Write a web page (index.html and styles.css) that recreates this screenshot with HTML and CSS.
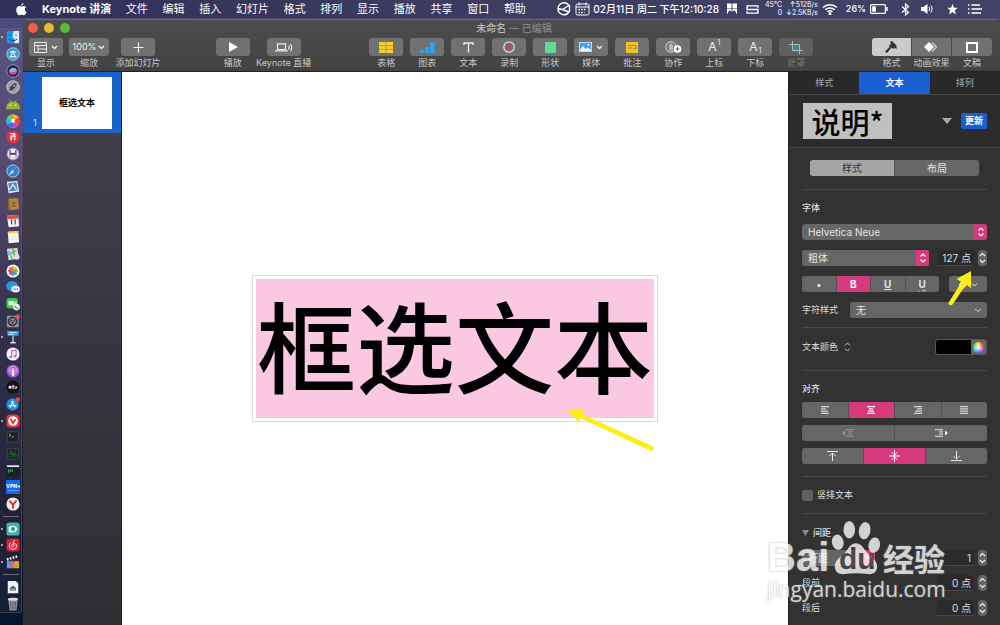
FILE: index.html
```html
<!DOCTYPE html>
<html lang="zh-CN">
<head>
<meta charset="utf-8">
<title>Keynote 讲演</title>
<link rel="stylesheet" href="styles.css">
</head>
<body>
<header class="menubar">
  <svg class="apple" viewBox="0 0 12 14"><path fill="#fff" d="M8.1 0c.1 1.500-1.200 2.900-2.500 2.900C5.500 1.500 6.800.2 8.100 0zM6.100 3.900C6.700 3.900 7.400 3.200 8.500 3.200c1 0 2 .5 2.600 1.400-2.200 1.300-1.800 4.300.5 5.200-.5 1.500-1.700 3.600-3 3.600-.9 0-1.300-.6-2.400-.6s-1.500.6-2.400.6C2.200 13.400.3 10.300.3 7.600c0-2.700 1.600-4.300 3.300-4.300 1.100 0 1.900.6 2.500.6z"/></svg>
  <nav class="menus">
    <b>Keynote 讲演</b><span>文件</span><span>编辑</span><span>插入</span><span>幻灯片</span><span>格式</span><span>排列</span><span>显示</span><span>播放</span><span>共享</span><span>窗口</span><span>帮助</span>
  </nav>
  <div class="status">
    <svg width="15" height="14" viewBox="0 0 15 14" fill="none" stroke="#fff" stroke-width="1.400"><path d="M13 3.500A6 6 0 1 0 13 10M13.500 3 6.500 7.500 1.500 6.500M6.500 7.500l6.500 2.500M13.500 3v7"/></svg>
    <svg width="15" height="14" viewBox="0 0 15 14" fill="none" stroke="#fff"><rect x="1" y="2" width="13" height="11" rx="1.500"/><path d="M1 5h13M4 .5v3M11 .5v3"/><path d="M3.500 7.500h8M3.500 10.500h6" stroke-width="1.500" stroke-dasharray="1.500 1.200"/></svg>
    <time>02月11日 周二 下午12:10:28</time>
    <svg class="s-flag" width="10" height="12" viewBox="0 0 11 12" fill="#fff"><path d="M0 0h5v9l-2.500-1.500L0 12zM6 0h5v12L8.500 7.500 6 9z"/><path d="M0 5.500h11" stroke="#3d3c5e" stroke-width=".6"/></svg>
    <svg class="s-swap" width="13" height="9" viewBox="0 0 14 10" fill="none" stroke="#fff" stroke-width="1.600"><path d="M13 3V1H1v4h4M1 7v2h12V5H4.500"/></svg>
    <div class="net"><span>45°C<br>0</span><span>↑512B/s<br>↓2.5KB/s</span></div>
    <svg class="s-wifi" width="16" height="12" viewBox="0 0 16 12" fill="none" stroke="#fff" stroke-width="1.500"><path d="M1 4.500a10 10 0 0 1 14 0M3.300 6.800a6.800 6.800 0 0 1 9.400 0M5.600 9a3.400 3.400 0 0 1 4.800 0"/><circle cx="8" cy="10.800" r=".7" fill="#fff"/></svg>
    <span class="pct">26%</span>
    <svg class="s-bat" width="18" height="10" viewBox="0 0 18 10"><rect x=".6" y=".6" width="14.800" height="8.800" rx="1" fill="none" stroke="#fff" stroke-width="1.200"/><path fill="#fff" d="M2.200 2.200h3.600v5.600H2.200zM16.200 3h1.500v4h-1.500z"/></svg>
    <svg class="s-bt" width="9" height="13" viewBox="0 0 9 13" fill="none" stroke="#fff" stroke-width="1.200"><path d="M1 3.500l6.500 6L4.500 12V1l3 2.500-6.500 6"/></svg>
    <svg class="s-vol" width="12" height="10" viewBox="0 0 12 10"><path fill="#fff" d="M0 3h2.500L6.500 0v10L2.500 7H0z"/><path d="M8 3a3 3 0 0 1 0 4M9.700 1.500a5 5 0 0 1 0 7" fill="none" stroke="#fff"/></svg>
    <svg class="s-star" width="11" height="11" viewBox="0 0 12 12"><path fill="#fff" d="M6 0l1.600 4H12L8.500 6.900 9.800 11.500 6 8.700 2.200 11.500 3.500 6.900 0 4h4.400z"/></svg>
    <svg class="s-list" width="14" height="10" viewBox="0 0 14 10" stroke="#fff" stroke-width="1.500"><path d="M0 1h1.500M0 5h1.500M0 9h1.500M3.500 1H12M3.500 5H14M3.500 9H13"/></svg>
  </div>
</header>

<div class="desktop">
  <aside class="dock">
    <ul>
      <li class="run"><svg viewBox="0 0 16 16"><rect x="1" y="1" width="14" height="14" rx="1.500" fill="#2196ee"/><path d="M9 1h6v14h-5c-.6-2-.7-4-.6-6H7.500C7.700 6 8.200 3 9 1z" fill="#dcebf5"/><path d="M4.500 5v1.500M11.500 5v1.500M3.500 10.500c3 2.400 6 2.400 9 0" stroke="#123a66" fill="none"/></svg></li>
      <li><svg viewBox="0 0 16 16"><circle cx="8" cy="8" r="7.200" fill="#3b9bd0" stroke="#a9d6e8"/><path d="M4 11h8M5 12l3-7 3 7M4.500 6.500c2-2 5-2 7 0" stroke="#dff2f9" fill="none" stroke-width="1.200"/></svg></li>
      <li><svg viewBox="0 0 16 16"><circle cx="8" cy="8" r="7.200" fill="#23234a" stroke="#a9a8c0"/><path d="M3 9c2-6 8-6 10-1-3-2-7 0-10 1z" fill="#5fd0e8"/><path d="M3 9c4-1 7-3 10-1-1 5-7 6-10 1z" fill="#d34b9b"/><path d="M5 9c2-1 4-1 6-1" stroke="#fff"/></svg></li>
      <li><svg viewBox="0 0 16 16"><circle cx="8" cy="8" r="7.200" fill="#9ba1aa" stroke="#c9ced4"/><path d="M12 3.500c-3 0-5 2-6 4l-2 .5 1 1-1.500 3.500L7 11l1 1 .6-2c2-1 3.500-3.500 3.400-6.500z" fill="#3b4049"/><circle cx="9.500" cy="6.500" r="1" fill="#ccd"/></svg></li>
      <li><svg viewBox="0 0 16 16"><path d="M0 14c0-6 3-9 8-9s8 3 8 9z" fill="#8fb53a"/><path d="M4 3l1.500 3M12 3l-1.500 3" stroke="#8fb53a"/><circle cx="5" cy="9.500" r=".9" fill="#fff"/><circle cx="11" cy="9.500" r=".9" fill="#fff"/></svg></li>
      <li><svg viewBox="0 0 16 16"><circle cx="8" cy="8" r="7.500" fill="#fff"/><path d="M8 8L8 .5A7.500 7.500 0 0 1 14.500 4z" fill="#ffb100"/><path d="M8 8l6.500-4a7.500 7.500 0 0 1 0 8z" fill="#ee3f34"/><path d="M8 8l6.500 4A7.500 7.500 0 0 1 8 15.500z" fill="#d43bb5"/><path d="M8 8v7.500A7.500 7.500 0 0 1 1.500 12z" fill="#3b69e9"/><path d="M8 8l-6.500 4a7.500 7.500 0 0 1 0-8z" fill="#23bfd4"/><path d="M8 8L1.500 4A7.500 7.500 0 0 1 8 .5z" fill="#71c83c"/><circle cx="8" cy="8" r="2.200" fill="#fff"/></svg></li>
      <li><svg viewBox="0 0 16 16"><circle cx="8" cy="8" r="7.500" fill="#e0323b"/><path d="M4.500 4h5l-2 2M5 7h6M6 7v5M10 4v8M4.500 9.500h3" stroke="#fff" fill="none" stroke-width="1.200"/></svg></li>
      <li><svg viewBox="0 0 16 16"><circle cx="8" cy="8" r="7" fill="#e7def2" stroke="#8a68bb"/><rect x="4" y="3.500" width="8" height="8.500" fill="#5c5178"/><path fill="#fff" d="M5.500 3.500h5v3h-5zM5 9h6v3H5z"/></svg></li>
      <li><svg viewBox="0 0 16 16"><circle cx="8" cy="8" r="7" fill="#2087dc" stroke="#c5d9e8"/><path d="M12.500 3.500L9 9 7 7z" fill="#f2574d"/><path d="M3.500 12.500L7 7l2 2z" fill="#fff"/></svg></li>
      <li><svg viewBox="0 0 16 16"><path fill="#eef3f7" d="M1 2l12-1 2 12-12 2z"/><path fill="#4b8ac9" d="M2.500 3.500l9.500-1 1.500 9.500-9.500 1z"/><path d="M4 11l4-6 4 6" stroke="#dbe6f2" stroke-width="1.500" fill="none"/></svg></li>
      <li><svg viewBox="0 0 16 16"><path fill="#b1843e" d="M2 2l12-1 1 13-12 1z"/><path fill="#8a6127" d="M2 2l1.500 0 1 13L3 15z"/><circle cx="9" cy="7" r="1.700" fill="#84602c"/><path d="M6 11c1-2.500 5-2.500 6 0z" fill="#84602c"/></svg></li>
      <li><svg viewBox="0 0 16 16"><path fill="#f5f5f5" d="M1 2l13-1 1 13-12 1z"/><path fill="#e34b43" d="M1 2l13-1 .3 4L1.500 6z"/><path d="M5.500 7.500l1-.5v5M9.500 7.500l1-.5v5" stroke="#444" stroke-width="1.300" fill="none"/></svg></li>
      <li><svg viewBox="0 0 16 16"><path fill="#f9f8ee" d="M2 2l12-1 1 13-12 1z"/><path fill="#f5c743" d="M2 2l12-1 .2 2L2.200 4z"/><path d="M4 8l9-.7M4 11l9-.7" stroke="#d8d5c5" stroke-width=".6"/></svg></li>
      <li><svg viewBox="0 0 16 16"><path fill="#d9e3c5" d="M1 2l12-1 2 12-12 2z"/><path d="M3 4l4 10M2 9l10-5" stroke="#6fb8d5" stroke-width="2"/><path d="M8 2l2 9" stroke="#72ae55" stroke-width="2"/><circle cx="12.500" cy="11.500" r="3" fill="#dfe2e5"/></svg></li>
      <li><svg viewBox="0 0 16 16"><circle cx="8" cy="8" r="7.500" fill="#f5f5f0"/><g stroke-width="3.200" stroke-linecap="round"><path d="M8 6V4" stroke="#f6a12b"/><path d="M9.500 6.500L11 5" stroke="#d9c62c"/><path d="M10 8h2" stroke="#7bbf49"/><path d="M9.500 9.500L11 11" stroke="#42ad9d"/><path d="M8 10v2" stroke="#5a88cf"/><path d="M6.500 9.500L5 11" stroke="#8f62b8"/><path d="M6 8H4" stroke="#d4507b"/><path d="M6.500 6.500L5 5" stroke="#ee6440"/></g></svg></li>
      <li><svg viewBox="0 0 16 16"><ellipse cx="7" cy="7" rx="6.800" ry="6" fill="#2797ee"/><ellipse cx="11" cy="10.500" rx="4.800" ry="3.800" fill="#e9f4fc"/><path d="M8.500 10.500h5.500" stroke="#3d7fb9" stroke-width="1.500" stroke-dasharray="1.300 .7"/></svg></li>
      <li><svg viewBox="0 0 16 16"><rect x=".5" y="1" width="13" height="12" rx="3" fill="#3bc74e"/><path fill="#fff" d="M3 4.500h6v5H3zM9.500 6.500L12 5v4z"/><circle cx="12" cy="11.500" r="3.800" fill="#e8f5e8"/><path d="M10.500 10c0 2 1.500 3 3 3" stroke="#3bb14a" stroke-width="1.200" fill="none"/></svg></li>
      <li><svg viewBox="0 0 16 16"><rect x="1" y="2" width="13.500" height="13" rx="1" fill="#8f949a"/><circle cx="7.500" cy="8.500" r="5" fill="#33373d" stroke="#22262b"/><circle cx="7.500" cy="8.500" r="3.200" fill="none" stroke="#aaa"/><path d="M7.500 8.500V5.500M7.500 8.500l3 1.500M7.500 8.500L4.500 10" stroke="#aaa"/><circle cx="13.500" cy="2.800" r="2.500" fill="#ef4440"/></svg></li>
      <li class="run"><svg viewBox="0 0 16 16"><path fill="#2fa0e8" d="M1 1h14l-1 5.500H2z"/><path d="M3 3h9M3 5h6" stroke="#d6f0ff"/><path d="M8 6.500V14" stroke="#cbd3da" stroke-width="1.500"/><ellipse cx="8" cy="14.500" rx="3.500" ry="1" fill="#dde2e6"/></svg></li>
      <li><svg viewBox="0 0 16 16"><circle cx="8" cy="8" r="7.500" fill="#f6f3fa"/><path d="M6.500 11.500V4.500l5-1v7" stroke="#b05bd5" stroke-width="1.300" fill="none"/><ellipse cx="5.300" cy="11.500" rx="1.600" ry="1.300" fill="#3f92e5"/><ellipse cx="10.300" cy="10.700" rx="1.600" ry="1.300" fill="#ee4c7e"/></svg></li>
      <li><svg viewBox="0 0 16 16"><circle cx="8" cy="8" r="7.500" fill="#a24bcb"/><circle cx="8" cy="7.500" r="4.800" fill="none" stroke="#e8cdf5"/><circle cx="8" cy="7.500" r="2.700" fill="none" stroke="#e8cdf5"/><path d="M8 7v6" stroke="#fff" stroke-width="2" stroke-linecap="round"/></svg></li>
      <li><svg viewBox="0 0 16 16"><circle cx="8" cy="8" r="7.500" fill="#111215"/><circle cx="4.700" cy="8.300" r="1.700" fill="#fff"/><path d="M8 5.500v4.500h1.500M7 7h2.500M10 7l1.300 3L12.800 7" stroke="#fff" fill="none"/></svg></li>
      <li><svg viewBox="0 0 16 16"><circle cx="7.500" cy="8.500" r="7" fill="#228ee9"/><path d="M4.500 12l4-7.500M6.500 4.500l4 7.500M3 10h9" stroke="#fff" stroke-width="1.300"/><circle cx="13.500" cy="2.800" r="2.500" fill="#ef4440"/></svg></li>
      <li class="run"><svg viewBox="0 0 16 16"><rect x=".5" y=".5" width="15" height="15" rx="4" fill="#e2383d"/><circle cx="8" cy="8" r="5.500" fill="#fff"/><path d="M5.500 6L8 10.500l2.500-4" stroke="#e2383d" stroke-width="2" fill="none" stroke-linecap="round"/></svg></li>
      <li><svg viewBox="0 0 16 16"><rect x="1.500" y="2" width="13" height="12" rx="1" fill="#202124" stroke="#4a4b4e"/><path d="M3.500 4.500l2 1.500-2 1.500M6.500 8h2.500" stroke="#ddd" fill="none" stroke-width=".8"/></svg></li>
      <li><svg viewBox="0 0 16 16"><rect x="1.500" y="2" width="13" height="12" rx="1" fill="#17241f" stroke="#4a4b4e"/><path d="M2 8h3l1-3 2 6 1-5 1 3h4" stroke="#2f7a4b" fill="none" stroke-width=".8"/><path d="M2 11h12M5 3v10M11 3v10" stroke="#2a5d40" stroke-width=".5"/></svg></li>
      <li><svg viewBox="0 0 16 16"><rect x="1" y="2" width="14" height="12" fill="#182224"/><path d="M1 2.500h14" stroke="#e7ecec" stroke-width="2"/><path d="M3 6v4M5 6v3M7 6v3" stroke="#2fd45a"/></svg></li>
      <li><svg viewBox="0 0 16 16"><rect x="0" y="0" width="16" height="16" rx="1" fill="#1769ed"/><text class="vpn" x="0" y="9">VPN+</text><path d="M2 12h12" stroke="#7fb0ff" stroke-width=".8"/></svg></li>
      <li><svg viewBox="0 0 16 16"><circle cx="8" cy="8" r="7.500" fill="#f6f3f1"/><path d="M4 4l4 5 4-5M8 8.500V13.500" stroke="#d92f22" stroke-width="2.200" fill="none"/></svg></li>
      <li class="rule"></li>
      <li class="run"><svg viewBox="0 0 16 16"><rect x=".5" y=".5" width="15" height="15" rx="3" fill="#45b1a8"/><path d="M3 11V6c3-3 9-2 10 2-1 4-6 5-10 3z" fill="#e8f7f4"/><circle cx="8" cy="8" r="2.200" fill="#268c86"/></svg></li>
      <li class="run"><svg viewBox="0 0 16 16"><rect x=".5" y=".5" width="15" height="15" rx="3.500" fill="#d82034"/><path d="M10.500 3C8 2.500 8.300 5 9 8.500 9.300 11 6.300 10.500 6.500 8.500 6.800 6 11 5.500 12 8c.8 2.500-1 5-4 5-4 0-6-5-2.500-8" stroke="#fff" stroke-width="1.100" fill="none"/></svg></li>
      <li class="run"><svg viewBox="0 0 16 16"><rect x="1" y="5" width="14" height="10" rx="1" fill="#333"/><path fill="#39b1e5" d="M1 7h5l-2 8H1z"/><path fill="#de5bb7" d="M6 7h4l-3 8H4z"/><path fill="#f59b2d" d="M10 7h5v4L7 15z"/><path fill="#8bc94a" d="M15 11v4H7z"/><path d="M1 5l13-3.500" stroke="#eee" stroke-width="3" stroke-dasharray="2 1.400"/></svg></li>
      <li class="rule"></li>
      <li><svg viewBox="0 0 16 16"><path fill="#f0f3f4" d="M2 1h9l3 3v11H2z"/><path fill="#b9d9e5" d="M11 1l3 3h-3z"/><path d="M4.500 12V9l3.500-2.500L11.500 9v3z" fill="#4a5560"/><path d="M5 10.500h6" stroke="#cfd8dc"/></svg></li>
      <li><svg viewBox="0 0 16 16"><path fill="#8e9196" d="M2.500 2h11l-1.500 13.500H4z"/><ellipse cx="8" cy="2.500" rx="5.700" ry="1.700" fill="#d5d7da"/><path d="M5 5l.7 9M8 5v9M11 5l-.7 9" stroke="#55585e"/></svg></li>
    </ul>
  </aside>

  <main class="window">
    <header class="chrome">
      <div class="titlebar">
        <div class="lights"><i class="red"></i><i class="yellow"></i><i class="green"></i></div>
        <h1>未命名 <span>— 已编辑</span></h1>
      </div>
      <div class="toolbar">
        <div class="tools">
          <div class="tool"><button aria-labelledby="t1"><svg width="13" height="11" viewBox="0 0 13 11" fill="none" stroke="#eee"><path d="M.5.5h12v10H.5zM.5 3.500h12M4 3.500v7M4 7h8.500" /></svg><svg width="7" height="5" viewBox="0 0 7 5" fill="none" stroke="#eee" stroke-width="1.400"><path d="M1 1l2.500 2.500L6 1"/></svg></button><span id="t1">显示</span></div>
          <div class="tool zoomer"><button aria-labelledby="t2">100%<svg width="7" height="5" viewBox="0 0 7 5" fill="none" stroke="#eee" stroke-width="1.400"><path d="M1 1l2.500 2.500L6 1"/></svg></button><span id="t2">缩放</span></div>
          <div class="tool add"><button aria-labelledby="t3"><svg width="11" height="11" viewBox="0 0 11 11" stroke="#eee" stroke-width="1.200"><path d="M5.500.5v10M.5 5.500h10"/></svg></button><span id="t3">添加幻灯片</span></div>
        </div>
        <div class="tools play">
          <div class="tool"><button aria-labelledby="t4"><svg width="10" height="10" viewBox="0 0 10 10" fill="#fff"><path d="M1 0l9 5-9 5z"/></svg></button><span id="t4">播放</span></div>
          <div class="tool"><button aria-labelledby="t5"><svg width="18" height="9" viewBox="0 0 18 9" fill="none" stroke="#eee" stroke-width="1.200"><path d="M2.500.8h8v5.700h-8zM0 7.900h13M13.500 2.500q1.500 2 0 4M15.500 1q2.500 3.500 0 7"/></svg></button><span id="t5">Keynote 直播</span></div>
        </div>
        <div class="tools">
          <div class="tool"><button aria-labelledby="t6"><svg width="14" height="11" viewBox="0 0 14 11"><path fill="#f6d22f" d="M0 0h14v11H0z"/><path d="M0 3.700h14M0 7.300h14M7 0v11" stroke="#a58a30" stroke-width=".8"/></svg></button><span id="t6">表格</span></div>
          <div class="tool"><button aria-labelledby="t7"><svg width="15" height="11" viewBox="0 0 15 11" fill="#2ea4ee"><path d="M0 8h4v3H0zM5 5h4v6H5zM10 0h4.500v11H10z"/></svg></button><span id="t7">图表</span></div>
          <div class="tool"><button aria-labelledby="t8"><svg width="11" height="11" viewBox="0 0 11 11" fill="none" stroke="#eee" stroke-width="1.300"><path d="M1 3V1h9v2M5.500 1v9.500"/></svg></button><span id="t8">文本</span></div>
          <div class="tool"><button aria-labelledby="t9"><svg width="12" height="12" viewBox="0 0 12 12"><circle cx="6" cy="6" r="5.200" fill="none" stroke="#ddd" stroke-width="1.300"/><circle cx="6" cy="6" r="2.300" fill="#e1394a"/></svg></button><span id="t9">录制</span></div>
          <div class="tool"><button aria-labelledby="t10"><svg width="11" height="11" viewBox="0 0 11 11"><path fill="#5fdc94" d="M0 0h11v11H0z"/></svg></button><span id="t10">形状</span></div>
          <div class="tool"><button aria-labelledby="t11"><svg width="13" height="10" viewBox="0 0 13 10"><path fill="#b9dcfa" d="M0 0h13v10H0z"/><path fill="#4c9af2" d="M1 1h11v8H1z"/><path fill="#f2f8ff" d="M1 8l3-4 2.500 3L9 5.500 12 8v1H1z"/><circle cx="9.500" cy="3" r="1" fill="#fff"/></svg><svg width="7" height="5" viewBox="0 0 7 5" fill="none" stroke="#eee" stroke-width="1.400"><path d="M1 1l2.500 2.500L6 1"/></svg></button><span id="t11">媒体</span></div>
          <div class="tool"><button aria-labelledby="t12"><svg width="12" height="11" viewBox="0 0 12 11"><path fill="#f2c22c" d="M0 0h12v11H0z"/><path d="M2 3.500h8v3H7.500M2 6h4" stroke="#a5801a" fill="none"/></svg></button><span id="t12">批注</span></div>
          <div class="tool"><button aria-labelledby="t13"><svg width="17" height="12" viewBox="0 0 17 12"><circle cx="6" cy="6" r="5.200" fill="none" stroke="#ddd"/><path d="M4 9.500V7L3.500 4.500 6 2l2.500 2.500L8 7v2.500" fill="#bbb"/><circle cx="12.500" cy="8" r="3.800" fill="#fff"/><path d="M12.500 6v4M10.500 8h4" stroke="#666"/></svg></button><span id="t13">协作</span></div>
          <div class="tool"><button class="letter" aria-labelledby="t14">A<sup>1</sup></button><span id="t14">上标</span></div>
          <div class="tool"><button class="letter" aria-labelledby="t15">A<sub>1</sub></button><span id="t15">下标</span></div>
          <div class="tool off"><button disabled aria-labelledby="t16"><svg width="14" height="13" viewBox="0 0 14 13"><path fill="#44859c" d="M4 4h6v5H4z"/><path d="M3.500 0v9.500H14M0 3.500h10.500V13" fill="none" stroke="#b5b5b5"/></svg></button><span id="t16">遮罩</span></div>
        </div>
        <div class="tools views">
          <div class="tool"><button aria-labelledby="t17"><svg width="12" height="12" viewBox="0 0 12 12" fill="#333"><path d="M5 1l2-1 4.500 4.500v4L9.500 6.500 8.500 8 6.500 6.500 2 12 0 10.500 5 5.500 3.500 5 6 3z"/></svg></button><span id="t17">格式</span></div>
          <div class="tool"><button aria-labelledby="t18"><svg width="14" height="10" viewBox="0 0 14 10"><path fill="#fff" d="M5 0l5 5-5 5-5-5z"/><path d="M8 .5L12.500 5 8 9.500" fill="none" stroke="#ccc" stroke-width="1.300"/></svg></button><span id="t18">动画效果</span></div>
          <div class="tool"><button aria-labelledby="t19"><svg width="12" height="11" viewBox="0 0 12 11"><rect x="1" y="1" width="10" height="9" fill="none" stroke="#fff" stroke-width="2"/></svg></button><span id="t19">文稿</span></div>
        </div>
      </div>
    </header>

    <div class="content">
      <aside class="slides"><div class="slide"><span class="num">1</span><div class="thumb">框选文本</div></div></aside>
      <section class="canvas">
        <div class="textbox"><p>框选文本</p>
          <svg class="arrow-a" width="90" height="46" viewBox="0 0 90 46"><path fill="#fbee12" d="M1 2l16-.5-2 4.500 70 32q3 2 1 4t-4 0L13 10l-1 5z"/></svg>
        </div>
      </section>

      <aside class="inspector">
        <div class="tabs"><button>样式</button><button class="active">文本</button><button>排列</button></div>
        <div class="preset"><span class="sample">说明*</span><svg width="10" height="6" viewBox="0 0 10 6"><path fill="#aaa" d="M0 0h10L5 6z"/></svg><button>更新</button></div>
        <div class="mode"><div class="seg"><button class="lit">样式</button><button>布局</button></div></div>

        <section class="sec font">
          <h2>字体</h2>
          <div class="pick pink"><select aria-label="字体"><option>Helvetica Neue</option></select><i><svg width="8" height="12" viewBox="0 0 8 12" fill="none" stroke="#fff" stroke-width="1.200"><path d="M1.500 4.500L4 2l2.500 2.500M1.500 7.500L4 10l2.500-2.500"/></svg></i></div>
          <div class="row">
            <div class="pick pink"><select aria-label="字重"><option>粗体</option></select><i><svg width="8" height="12" viewBox="0 0 8 12" fill="none" stroke="#fff" stroke-width="1.200"><path d="M1.500 4.500L4 2l2.500 2.500M1.500 7.500L4 10l2.500-2.500"/></svg></i></div>
            <input class="num-in size" aria-label="字号" value="127 点"><button class="step" aria-label="调整字号"><svg width="7" height="12" viewBox="0 0 7 12" fill="none" stroke="#eee" stroke-width="1.200"><path d="M1 4l2.500-2.500L6 4M1 8l2.500 2.500L6 8"/></svg></button>
            <svg class="arrow-b" width="26" height="38" viewBox="0 0 26 38"><path fill="#fbee12" d="M23 1v17l-5-3.500L5 34q-1.500 2-3.500 1T1 32L13.500 12 8.500 9z"/></svg>
          </div>
          <div class="row">
            <div class="seg letters"><button>•</button><button class="hot">B</button><button><u>U</u></button><button><u class="wavy">U</u></button></div>
            <button class="gear" aria-label="高级选项"><svg width="20" height="11" viewBox="0 0 20 11" fill="none" stroke="#eee"><circle cx="5" cy="5.500" r="2.500" stroke-width="1.600"/><path d="M5 1v2M5 8v2M1 5.500h2M7 5.500h2M14 4.500l2.500 2.500L19 4.500"/></svg></button>
          </div>
          <div class="row"><label for="charstyle">字符样式</label><div class="pick drop"><select id="charstyle"><option>无</option></select><i><svg width="8" height="5" viewBox="0 0 8 5" fill="none" stroke="#ccc"><path d="M1 1l3 2.500L7 1"/></svg></i></div></div>
        </section>

        <section class="sec color">
          <span>文本颜色</span><svg width="7" height="10" viewBox="0 0 7 10" fill="none" stroke="#bbb"><path d="M1 3.500L3.500 1 6 3.500M1 6.500L3.500 9 6 6.500"/></svg>
          <button class="well" aria-label="文本颜色"><i></i></button>
        </section>

        <section class="sec align">
          <h2>对齐</h2>
          <div class="seg">
            <button aria-label="左对齐"><svg width="8" height="8" viewBox="0 0 8 8" stroke="#d5d5d5" stroke-width="1.300"><path d="M0 .7h8M0 2.900h5M0 5.100h7M0 7.300h8"/></svg></button>
            <button class="hot" aria-label="居中"><svg width="8" height="8" viewBox="0 0 8 8" stroke="#fff" stroke-width="1.300"><path d="M0 .7h8M2 2.900h4M1 5.100h6M0 7.300h8"/></svg></button>
            <button aria-label="右对齐"><svg width="8" height="8" viewBox="0 0 8 8" stroke="#d5d5d5" stroke-width="1.300"><path d="M0 .7h8M3 2.900h5M1 5.100h7M0 7.300h8"/></svg></button>
            <button aria-label="两端对齐"><svg width="8" height="8" viewBox="0 0 8 8" stroke="#d5d5d5" stroke-width="1.300"><path d="M0 .7h8M0 2.900h8M0 5.100h8M0 7.300h8"/></svg></button>
          </div>
          <div class="seg">
            <button aria-label="减少缩进"><svg width="13" height="8" viewBox="0 0 13 8"><path fill="#999" d="M3 1.500v5L0 4z"/><path d="M4 .7h8M6 2.900h4M6 5.100h4M4 7.300h8" stroke="#999"/></svg></button>
            <button aria-label="增加缩进"><svg width="13" height="8" viewBox="0 0 13 8"><path fill="#eee" d="M10 1.500v5L13 4z"/><path d="M0 .7h8M4 2.900h4M4 5.100h4M0 7.300h8" stroke="#e5e5e5"/></svg></button>
          </div>
          <div class="seg">
            <button aria-label="顶部"><svg width="11" height="10" viewBox="0 0 11 10" stroke="#e5e5e5" fill="none"><path d="M0 .5h11M5.500 10V2M2.500 5l3-3 3 3"/></svg></button>
            <button class="hot" aria-label="中间"><svg width="11" height="12" viewBox="0 0 11 12" stroke="#fff" fill="none"><path d="M0 6h11M5.500 0v12M3 2.500L5.500 5 8 2.500M3 9.500L5.500 7 8 9.500"/></svg></button>
            <button aria-label="底部"><svg width="11" height="10" viewBox="0 0 11 10" stroke="#e5e5e5" fill="none"><path d="M0 9.500h11M5.500 0v8M2.500 5l3 3 3-3"/></svg></button>
          </div>
        </section>

        <section class="sec check"><input type="checkbox" id="vert"><label for="vert">竖排文本</label></section>

        <section class="sec spacing">
          <h2><svg width="7" height="6" viewBox="0 0 7 6"><path fill="#888" d="M0 0h7L3.500 6z"/></svg>间距</h2>
          <div class="row"><div class="pick pink line"><select aria-label="行距类型"><option>行距</option></select><i><svg width="8" height="6" viewBox="0 0 8 6" fill="none" stroke="#fff" stroke-width="1.200"><path d="M1 1l3 3 3-3"/></svg></i></div><input class="num-in" aria-label="行距" value="1"><button class="step" aria-label="调整行距"><svg width="7" height="12" viewBox="0 0 7 12" fill="none" stroke="#eee" stroke-width="1.200"><path d="M1 4l2.500-2.500L6 4M1 8l2.500 2.500L6 8"/></svg></button></div>
          <div class="row"><label for="before">段前</label><input class="num-in" id="before" value="0 点"><button class="step" aria-label="调整段前"><svg width="7" height="12" viewBox="0 0 7 12" fill="none" stroke="#eee" stroke-width="1.200"><path d="M1 4l2.500-2.500L6 4M1 8l2.500 2.500L6 8"/></svg></button></div>
          <div class="row"><label for="after">段后</label><input class="num-in" id="after" value="0 点"><button class="step" aria-label="调整段后"><svg width="7" height="12" viewBox="0 0 7 12" fill="none" stroke="#eee" stroke-width="1.200"><path d="M1 4l2.500-2.500L6 4M1 8l2.500 2.500L6 8"/></svg></button></div>
        </section>
      </aside>
    </div>
  </main>
</div>

<div class="watermark">
  <div class="brand"><span class="bai">Bai</span>
    <span class="paw"><svg width="50" height="56" viewBox="0 0 52 56" fill="#fff"><ellipse cx="19" cy="9" rx="6" ry="9"/><ellipse cx="35" cy="10" rx="6" ry="9" transform="rotate(10 35 10)"/><ellipse cx="7" cy="22" rx="6" ry="8" transform="rotate(-12 7 22)"/><ellipse cx="45" cy="25" rx="6" ry="8" transform="rotate(12 45 25)"/><path d="M26 23c5 0 7 4 10 8 4 5 12 9 12 16 0 6-4 9-10 8-8-1-16-1-24 0-6 1-10-2-10-8 0-7 8-11 12-16 3-4 5-8 10-8z"/></svg><em>du</em></span>
    <span class="jy">经验</span></div>
  <div class="url">jingyan.baidu.com</div>
</div>
</body>
</html>
```
FILE: styles.css
```css
* { box-sizing: border-box; }
body {
  margin: 0;
  height: 100vh;
  display: flex;
  flex-direction: column;
  overflow: hidden;
  position: relative;
  background: linear-gradient(#4b4a7d, #50426b 25%, #2b2845 50%, #14162c 85%, #06152e);
  color: #ddd;
  font: 9px/12px Inter, "Noto Sans CJK SC", sans-serif;
}
svg { display: block; flex: none; }
button, select, input { font: inherit; color: inherit; border: 0; padding: 0; margin: 0; }
button { display: flex; align-items: center; justify-content: center; }
h1, h2, p, ul { margin: 0; padding: 0; font-weight: 500; font-size: inherit; }
ul { list-style: none; }

/* menu bar */
.menubar {
  flex: none;
  height: 18px;
  display: flex;
  align-items: center;
  padding: 0 18px 0 16px;
  background: linear-gradient(90deg, #302f58, #3d3d62 50%, #414266);
  color: #fff;
  font-size: 11px;
  line-height: 16px;
  white-space: nowrap;
}
.apple { width: 11px; height: 13px; margin-right: 15px; }
.menus { width: 484px; display: flex; justify-content: space-between; }
.menus b { font-weight: 700; }
.status { margin-left: auto; display: flex; align-items: center; }
.status time { margin: 0 8px 0 3px; font-size: 10px; font-weight: 500; }
.status svg + svg { margin-left: 4px; }
.status .s-swap { margin: 0 6px 0 9px; }
.net { display: flex; gap: 4px; font-size: 7px; line-height: 8px; text-align: right; }
.s-wifi { margin: 0 8px 0 4px; }
.pct { font-size: 9px; font-weight: 500; margin-right: 4px; }
.status .s-bt { margin-left: 13px; }
.status .s-vol { margin-left: 11px; }
.status .s-star { margin-left: 14px; }
.status .s-list { margin-left: 10px; }

.desktop { flex: 1; min-height: 0; display: flex; padding-top: 1px; }

/* dock */
.dock { width: 23px; display: flex; padding: 9px 1px 12px 0; }
.dock ul {
  flex: 1;
  display: flex;
  flex-direction: column;
  border: solid #6665807a;
  border-width: 1px 1px 1px 0;
  border-radius: 0 3px 3px 0;
  background: #ffffff0d;
}
.dock li { flex: 1; display: flex; align-items: center; padding-left: 6px; }
.dock li svg { width: 14px; height: 14px; }
.dock .run { padding-left: 1px; gap: 3px; }
.dock .run::before { content: ""; width: 2px; height: 2px; border-radius: 50%; background: #ccc; }
.dock .rule { flex: 0 0 8px; padding-left: 3px; }
.dock .rule::before { content: ""; width: 16px; height: 1px; background: #6c6c7c; }
.vpn { font: 700 6px Inter, sans-serif; fill: #fff; }

/* window */
.window { flex: 1; min-width: 0; display: flex; flex-direction: column; border-radius: 4px 4px 0 0; overflow: hidden; background: #323232; }
.chrome { flex: none; background: linear-gradient(#4c4c4c, #424242); border-top: 1px solid #6a6a6a; border-bottom: 1px solid #222; }
.titlebar { height: 16px; display: flex; align-items: center; position: relative; padding-left: 5px; }
.lights { position: absolute; display: flex; gap: 6px; }
.lights i { width: 10px; height: 10px; border-radius: 50%; }
.red { background: #f25a52; }
.yellow { background: #e6bb31; }
.green { background: #57c038; }
h1 { flex: 1; text-align: center; font-size: 10px; color: #bbb; }
h1 span { color: #858585; }
.toolbar {
  height: 35px;
  padding: 2px 8px 0 6px;
  display: grid;
  grid-template-columns: auto 61fr auto 69fr auto 59fr auto;
}
.tools { display: flex; gap: 7px; grid-row: 1; }
.tools:nth-child(1) { grid-column: 1; gap: 6px; }
.tools:nth-child(2) { grid-column: 3; }
.tools:nth-child(3) { grid-column: 5; }
.tools:nth-child(4) { grid-column: 7; }
.tools.play { gap: 17px; }
.tools.views { gap: 1px; }
.tool { width: 34px; display: flex; flex-direction: column; align-items: center; gap: 1px; color: #c8c8c8; white-space: nowrap; }
.tool button { width: 100%; height: 18px; gap: 4px; border-radius: 3px; background: #717171; color: #eee; }
.tool > span { width: max-content; }
.tool.zoomer { width: 40px; }
.tool.zoomer button { gap: 2px; }
.tool.add { margin-left: 6px; }
.tool .letter { gap: 1px; font-size: 12px; }
.letter sup, .letter sub { font-size: 7px; line-height: 10px; }
.letter sup { align-self: flex-start; }
.letter sub { align-self: flex-end; }
.tool.off { color: #777; }
.tool.off button { background: #606060; }
.views .tool { width: 39px; }
.views .tool:last-child { width: 40px; }
.views .tool button { border-radius: 0; }
.views .tool:first-child button { border-radius: 3px 0 0 3px; background: #cbcbcb; }
.views .tool:last-child button { border-radius: 0 3px 3px 0; }

.content { flex: 1; min-height: 0; display: flex; }
.slides { width: 99px; background: linear-gradient(#45414d, #36353e 50%, #2e2e32); border-right: 1px solid #222; }
.slide { display: flex; align-items: flex-end; justify-content: space-between; padding: 5px 9px 4px 10px; background: #1a63c8; }
.thumb { width: 70px; height: 52px; display: flex; align-items: center; justify-content: center; background: #fff; color: #000; font-weight: 700; }
.canvas { flex: 1; display: flex; align-items: center; justify-content: center; background: #fff; }
.textbox { position: relative; padding: 3px; border: 1px solid #d9d9de; }
.textbox p { padding: 0 1px 10px; background: #fac8e1; color: #000; font: 500 99px/129px "Noto Sans CJK SC", sans-serif; }
.arrow-a { position: absolute; left: 314px; top: 132px; }

/* inspector */
.inspector { width: 212px; border-left: 1px solid #1e1e1e; background: #323232; }
.tabs { display: flex; height: 23px; background: #292929; border-bottom: 1px solid #484848; }
.tabs button { flex: 1; background: none; color: #aaa; }
.tabs .active { background: #1a5fd0; color: #fff; font-weight: 700; }
.preset { display: flex; align-items: center; padding: 8px 13px 8px 14px; background: #2b2b2b; border-bottom: 1px solid #484848; }
.sample { width: 89px; margin-right: auto; text-align: center; background: #c0c0c0; color: #000; font: 500 29px/36px "Noto Sans CJK SC", sans-serif; }
.preset button { width: 26px; height: 16px; margin-left: 9px; border-radius: 2px; background: #1a5fd0; color: #fff; font-weight: 700; }
.mode { padding: 12px 21px 13px; }
.seg { flex: 1; display: flex; gap: 1px; border-radius: 3px; overflow: hidden; background: #525252; }
.seg button { flex: 1; height: 16px; background: #666; color: #e2e2e2; font-size: 10px; }
.seg .lit { background: #a6a6a6; color: #333; }
.seg .hot { background: #d63a7e; color: #fff; }
.letters { margin-right: 10px; }
.letters button { font-weight: 700; }
.wavy { text-decoration-style: wavy; text-decoration-thickness: 1px; }
.sec { margin: 0 13px; border-top: 1px solid #484848; }
.sec h2 { height: 12px; }
.row { display: flex; align-items: center; position: relative; }
.pick { position: relative; flex: 1; height: 16px; display: flex; border-radius: 3px; overflow: hidden; background: #666; font-size: 10px; }
.pick select { appearance: none; width: 100%; padding-left: 6px; background: none; line-height: 16px; color: #e2e2e2; }
.pick i { position: absolute; right: 0; top: 0; width: 13px; height: 16px; display: flex; align-items: center; justify-content: center; pointer-events: none; }
.pink i { background: #d63a7e; }
.drop i { width: 18px; }
.num-in { width: 37px; height: 16px; padding-right: 3px; text-align: right; font-size: 10px; background: #2b2b2b; border-bottom: 1px solid #484848; }
.num-in.size { margin-left: 8px; }
.step { width: 9px; height: 16px; margin-left: 4px; border-radius: 4px; background: #666; }
.gear { width: 38px; height: 16px; border-radius: 3px; background: #666; }
.font { padding: 12px 0 9px; display: flex; flex-direction: column; gap: 10px; }
.row label { width: 48px; }
.arrow-b { position: absolute; left: 146px; top: 20px; z-index: 2; }
.color { display: flex; align-items: center; gap: 6px; padding: 11px 0 15px; }
.well { width: 52px; height: 16px; margin-left: auto; padding-right: 2px; justify-content: flex-end; border: 1px solid #555; border-radius: 3px; background: linear-gradient(90deg, #000 35px, #666 35px); }
.well i { width: 11px; height: 11px; border-radius: 50%; background: radial-gradient(#fff, #fff0 65%), conic-gradient(#f7b733, #e94242, #b44be0, #4a6cf0, #35c9d8, #59c94a, #f7e633); }
.align { padding: 12px 0; display: flex; flex-direction: column; gap: 7px; }
.check { display: flex; align-items: center; gap: 4px; padding: 12px 0; }
.check input { appearance: none; width: 11px; height: 11px; border-radius: 2px; background: #606060; }
.spacing { padding-top: 13px; display: flex; flex-direction: column; gap: 9px; }
.spacing h2 { display: flex; align-items: center; gap: 4px; margin-bottom: 2px; }
.spacing .num-in { margin-left: auto; }
.spacing .line { flex: none; width: 73px; }

/* watermark */
.watermark { position: absolute; right: 55px; bottom: 22px; width: 178px; color: #fff; opacity: .78; pointer-events: none; white-space: nowrap; }
.brand { display: flex; align-items: flex-end; height: 57px; text-shadow: 0 0 2px #888; }
.bai { font: 700 40px/38px "Liberation Sans", sans-serif; width: 64px; }
.paw { position: relative; }
.paw em { position: absolute; left: 8px; bottom: 2px; color: #444; text-shadow: none; font: normal 700 30px/30px "Liberation Sans", sans-serif; }
.jy { margin-left: auto; font: 700 31px/36px "Noto Sans CJK SC", sans-serif; }
.url { font: 21px/27px "Open Sans", sans-serif; text-shadow: 0 0 2px #888; }
```
